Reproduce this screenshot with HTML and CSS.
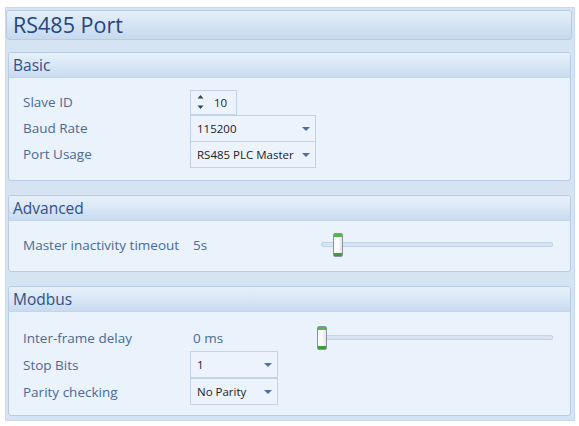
FILE: index.html
```html
<!DOCTYPE html>
<html lang="en">
<head>
<meta charset="utf-8">
<title>RS485 Port</title>
<link rel="stylesheet" href="styles.css">
</head>
<body>
<div class="panel">
  <div class="titlebar">RS485 Port</div>

  <section class="group">
    <div class="group-head">Basic</div>
    <div class="group-body">
      <div class="row">
        <span class="label">Slave ID</span>
        <div class="spin">
          <span class="spin-btns">
            <svg width="7" height="16" viewBox="0 0 7 16"><path d="M3.5 1 L6.5 4.5 H0.5 Z M0.5 11.5 H6.5 L3.5 15 Z" fill="#2f4468"/></svg>
          </span>
          <span class="spin-val">10</span>
        </div>
      </div>
      <div class="row">
        <span class="label">Baud Rate</span>
        <div class="combo wide"><span class="combo-text">115200</span><span class="arrow"></span></div>
      </div>
      <div class="row">
        <span class="label">Port Usage</span>
        <div class="combo wide"><span class="combo-text">RS485 PLC Master</span><span class="arrow"></span></div>
      </div>
    </div>
  </section>

  <section class="group">
    <div class="group-head">Advanced</div>
    <div class="group-body">
      <div class="row">
        <span class="label">Master inactivity timeout</span>
        <span class="value">5s</span>
        <div class="slider">
          <span class="track"></span>
          <span class="thumb" style="left: 16px"></span>
        </div>
      </div>
    </div>
  </section>

  <section class="group">
    <div class="group-head">Modbus</div>
    <div class="group-body tall-rows">
      <div class="row">
        <span class="label">Inter-frame delay</span>
        <span class="value">0 ms</span>
        <div class="slider">
          <span class="track"></span>
          <span class="thumb" style="left: 0px"></span>
        </div>
      </div>
      <div class="row">
        <span class="label">Stop Bits</span>
        <div class="combo narrow"><span class="combo-text">1</span><span class="arrow"></span></div>
      </div>
      <div class="row">
        <span class="label">Parity checking</span>
        <div class="combo narrow"><span class="combo-text">No Parity</span><span class="arrow"></span></div>
      </div>
    </div>
  </section>
</div>
</body>
</html>
```

FILE: styles.css
```css
* {
  box-sizing: border-box;
}

html, body {
  margin: 0;
  background: #ffffff;
}

body {
  padding: 7px 4px 5px 5px;
  font-family: "Open Sans", "Noto Sans", sans-serif;
}

.panel {
  width: 570px;
  height: 414px;
  background: #d5e3f3;
  border: 1px solid #c9daee;
  display: flex;
  flex-direction: column;
}

.titlebar {
  margin: 2px 2px 0 0;
  height: 30px;
  border: 1px solid #b7cce4;
  border-radius: 3px;
  background: linear-gradient(#e6eff9, #d6e5f5 45%, #c6d9ee);
  color: #24467c;
  font-size: 21.5px;
  line-height: 27px;
  padding-left: 6px;
}

.group {
  margin: 12px 3px 0 2px;
  border: 1px solid #b8cce4;
  border-radius: 3px;
  background: #eaf2fc;
  overflow: hidden;
}

.group + .group {
  margin-top: 14px;
}

.group-head {
  height: 25px;
  background: linear-gradient(#e7f0fa, #d9e7f6 50%, #c8dbf0);
  border-bottom: 1px solid #c2d5eb;
  color: #2f5188;
  font-size: 15.5px;
  line-height: 24px;
  padding-left: 4px;
}

.group-body {
  padding: 11px 0 13px 14px;
}

.row {
  display: flex;
  align-items: center;
  height: 26px;
}

.tall-rows {
  padding: 12px 0 10px 14px;
}

.tall-rows .row {
  height: 27px;
}

.label {
  width: 167px;
  flex: none;
  color: #4c6a93;
  font-size: 13.5px;
}

.value {
  width: 127px;
  flex: none;
  padding-left: 3px;
  color: #4c6a93;
  font-size: 13.5px;
}

/* numeric spinner */
.spin {
  width: 47px;
  height: 25px;
  border: 1px solid #c3d3e7;
  background: #edf3fc;
  display: flex;
  align-items: center;
  padding-left: 6px;
}

.spin-btns {
  display: flex;
  align-items: center;
  width: 17px;
}

.spin-val {
  font-size: 11.5px;
  color: #222;
}

/* drop-down boxes */
.combo {
  height: 27px;
  border: 1px solid #c3d3e7;
  background: #edf3fc;
  display: flex;
  align-items: center;
  justify-content: space-between;
  padding: 0 5px 0 6px;
}

.combo.wide {
  width: 126px;
}

.combo.narrow {
  width: 88px;
}

.combo-text {
  font-size: 11.5px;
  color: #222;
  white-space: nowrap;
}

.arrow {
  width: 0;
  height: 0;
  border-left: 4px solid transparent;
  border-right: 4px solid transparent;
  border-top: 4px solid #4f6fa3;
  margin-top: 1px;
}

/* horizontal slider */
.slider {
  position: relative;
  width: 236px;
  height: 26px;
}

.track {
  position: absolute;
  left: 4px;
  right: 0;
  top: 10px;
  height: 5px;
  border-radius: 2px;
  background: #d8e4f1;
  border: 1px solid #c3d3e6;
}

.thumb {
  position: absolute;
  top: 1px;
  width: 10px;
  height: 24px;
  border: 1px solid #8b939c;
  border-radius: 2px;
  background:
    linear-gradient(#52b848, #52b848) top / 100% 3px no-repeat,
    linear-gradient(#3f9e3a, #3f9e3a) bottom / 100% 3px no-repeat,
    linear-gradient(90deg, #f4f6f8, #ffffff 50%, #dfe3e8);
}
```
